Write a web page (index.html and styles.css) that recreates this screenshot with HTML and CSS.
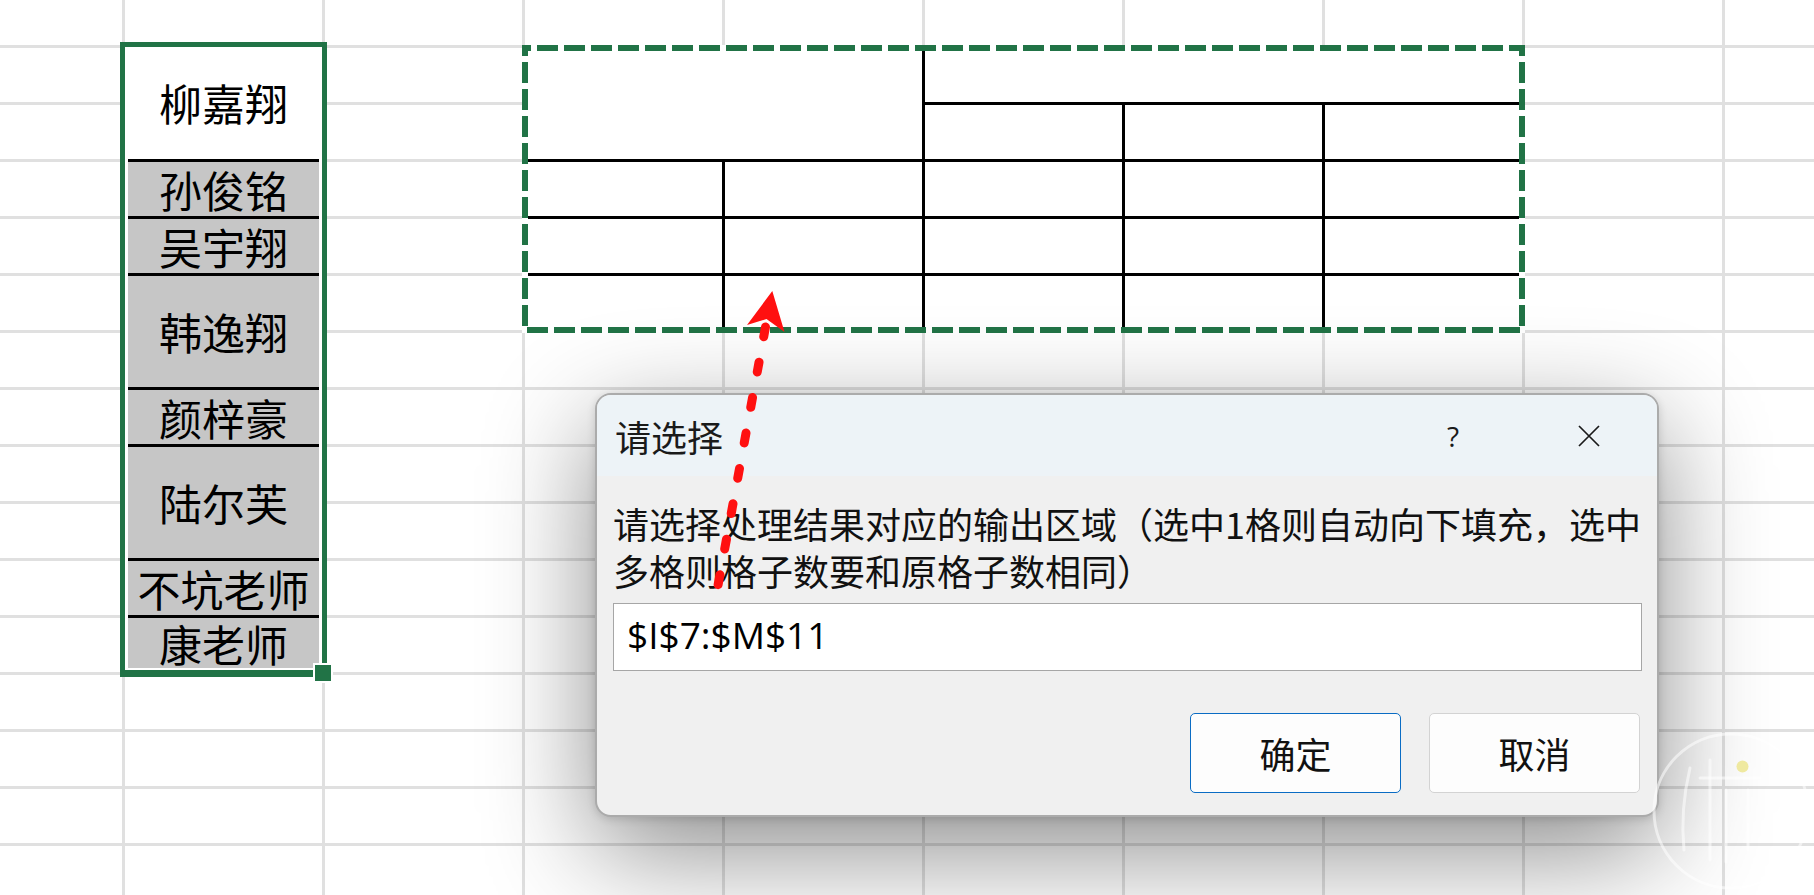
FILE: index.html
```html
<!DOCTYPE html>
<html lang="zh-CN">
<head>
<meta charset="utf-8">
<title>请选择</title>
<link rel="stylesheet" href="styles.css">
</head>
<body>
<div class="sheet">
  <div class="names">
    <div class="nm tall">柳嘉翔</div>
    <div class="nm gray line">孙俊铭</div>
    <div class="nm gray line">吴宇翔</div>
    <div class="nm gray line tall">韩逸翔</div>
    <div class="nm gray line">颜梓豪</div>
    <div class="nm gray line tall">陆尔芙</div>
    <div class="nm gray line">不坑老师</div>
    <div class="nm gray line last">康老师</div>
    <div class="sel"></div>
    <div class="handle"></div>
  </div>

  <div class="tbl">
    <div class="tc head-left"></div>
    <div class="tc head-right bl"></div>
    <div class="tc bl bt"></div>
    <div class="tc bl bt"></div>
    <div class="tc bl bt"></div>

    <div class="tc bt"></div>
    <div class="tc bl bt"></div>
    <div class="tc bl bt"></div>
    <div class="tc bl bt"></div>
    <div class="tc bl bt"></div>

    <div class="tc bt"></div>
    <div class="tc bl bt"></div>
    <div class="tc bl bt"></div>
    <div class="tc bl bt"></div>
    <div class="tc bl bt"></div>

    <div class="tc bt"></div>
    <div class="tc bl bt"></div>
    <div class="tc bl bt"></div>
    <div class="tc bl bt"></div>
    <div class="tc bl bt"></div>

    <svg class="ants" width="1009" height="294" viewBox="0 0 1009 294">
      <rect x="6" y="6" width="997" height="282" fill="none" stroke="#ffffff" stroke-width="6"/>
      <rect x="6" y="6" width="997" height="282" fill="none" stroke="#217346" stroke-width="6" stroke-dasharray="21 6" stroke-dashoffset="15"/>
    </svg>
  </div>
</div>

<div class="dlg">
  <div class="dlg-title">
    <div class="dlg-caption">请选择</div>
    <div class="tb-btn help">?</div>
    <div class="tb-btn close">
      <svg width="22" height="22" viewBox="0 0 22 22"><path d="M1 1 L21 21 M21 1 L1 21" stroke="#1a1a1a" stroke-width="1.7" fill="none"/></svg>
    </div>
  </div>
  <div class="dlg-body">
    <div class="msg">
      <span>请选择处理结果对应的输出区域（选中1格则自动向下填充，选中</span>
      <span>多格则格子数要和原格子数相同）</span>
    </div>
    <div class="inp">$I$7:$M$11</div>
    <div class="btns">
      <div class="btn primary">确定</div>
      <div class="btn">取消</div>
    </div>
  </div>
</div>

<svg class="arrow" width="1814" height="895" viewBox="0 0 1814 895">
  <path d="M765.5 327 Q742 455 717.5 588" fill="none" stroke="#ff1010" stroke-width="9" stroke-linecap="round" stroke-dasharray="10 26"/>
  <polygon points="772.3,291 747,325 766.5,319 784.5,332" fill="#ff1010"/>
</svg>

<svg class="wm" width="1814" height="895" viewBox="0 0 1814 895">
  <g fill="none" stroke="#ffffff" stroke-opacity="0.55" stroke-width="3" stroke-linecap="round">
    <circle cx="1731" cy="811" r="77"/>
    <path d="M1690 768 Q1680 810 1684 850"/>
    <path d="M1710 760 L1710 860"/>
    <path d="M1726 790 L1726 862"/>
    <path d="M1700 778 L1760 778"/>
    <path d="M1748 790 L1748 850"/>
  </g>
  <circle cx="1742.5" cy="766.5" r="6" fill="#efe9a0"/>
</svg>
</body>
</html>
```

FILE: styles.css
```css
html, body {
  margin: 0;
  padding: 0;
}

body {
  width: 1814px;
  height: 895px;
  overflow: hidden;
  position: relative;
  background: #ffffff;
  font-family: "Noto Sans CJK SC", sans-serif;
}

.sheet {
  width: 1814px;
  height: 895px;
  overflow: hidden;
  display: grid;
  grid-template-columns: 122px repeat(9, 200px);
  grid-template-rows: 45px repeat(15, 57px);
  background-color: #ffffff;
  background-image:
    linear-gradient(to right, #e0e0e0 3px, transparent 3px),
    linear-gradient(to bottom, #e0e0e0 3px, transparent 3px);
  background-size: 200px 100%, 100% 57px;
  background-position: 122px 0, 0 45px;
}

/* ---------- name column ---------- */
.names {
  grid-column: 2;
  grid-row: 2 / span 11;
  position: relative;
  background: #ffffff;
  padding: 0 3px 0 6px;
  display: flex;
  flex-direction: column;
}

.nm {
  box-sizing: border-box;
  height: 57px;
  display: flex;
  align-items: center;
  justify-content: center;
  font-size: 43px;
  line-height: 43px;
  color: #000;
  white-space: nowrap;
}

.nm.tall { height: 114px; }
.nm.last { height: 53px; }
.nm.gray { background: #c6c6c6; }
.nm.line { border-top: 3px solid #000; }

.sel {
  position: absolute;
  left: -2px;
  top: -3px;
  right: -5px;
  bottom: -5px;
  border: 5px solid #217346;
  border-bottom-width: 7px;
}

.handle {
  position: absolute;
  left: 191px;
  top: 618px;
  width: 16px;
  height: 16px;
  background: #217346;
  border: 2px solid #ffffff;
}

/* ---------- target table ---------- */
.tbl {
  grid-column: 4 / span 5;
  grid-row: 2 / span 5;
  position: relative;
  background: #ffffff;
  display: grid;
  grid-template-columns: repeat(5, 200px);
  grid-template-rows: repeat(5, 57px);
}

.tc { box-sizing: border-box; }
.tc.bl { border-left: 3px solid #000; }
.tc.bt { border-top: 3px solid #000; }
.head-left { grid-column: 1 / span 2; grid-row: 1 / span 2; }
.head-right { grid-column: 3 / span 3; grid-row: 1; }

.ants {
  position: absolute;
  left: -3px;
  top: -3px;
}

/* ---------- dialog ---------- */
.dlg {
  position: absolute;
  left: 595px;
  top: 393px;
  width: 1064px;
  height: 424px;
  box-sizing: border-box;
  border: 2px solid #ababab;
  border-radius: 16px;
  background: #f0f0f0;
  box-shadow: 0 34px 110px rgba(0, 0, 0, 0.46), 0 2px 8px rgba(0, 0, 0, 0.14);
  overflow: hidden;
  display: flex;
  flex-direction: column;
  color: #1a1a1a;
  font-family: "Noto Sans CJK SC", sans-serif;
}

.dlg-title {
  height: 81px;
  flex: none;
  background: #edf3f7;
  display: flex;
  align-items: center;
  padding-left: 18px;
}

.dlg-caption {
  flex: 1;
  font-size: 36px;
}

.tb-btn {
  width: 136px;
  height: 100%;
  display: flex;
  align-items: center;
  justify-content: center;
}

.help {
  font-family: "Open Sans", sans-serif;
  font-size: 28px;
  color: #1a1a1a;
}

.dlg-body {
  flex: 1;
  padding: 24px 15px 22px 16px;
  display: flex;
  flex-direction: column;
}

.msg {
  font-size: 36px;
  line-height: 47px;
  color: #111;
}

.msg span {
  display: block;
  white-space: nowrap;
}

.inp {
  margin-top: 9px;
  height: 68px;
  box-sizing: border-box;
  border: 1px solid #a6a6a6;
  background: #ffffff;
  display: flex;
  align-items: center;
  padding: 0 12px 5px 13px;
  font-family: "Open Sans", sans-serif;
  font-size: 37px;
  color: #000;
}

.btns {
  margin-top: 42px;
  display: flex;
  justify-content: flex-end;
  gap: 28px;
  padding-right: 2px;
}

.btn {
  width: 211px;
  height: 80px;
  box-sizing: border-box;
  border: 1px solid #d3d3d3;
  border-radius: 5px;
  background: #fdfdfd;
  display: flex;
  align-items: center;
  justify-content: center;
  font-size: 36px;
  color: #111;
}

.btn.primary {
  border-color: #0a6cc4;
}

/* ---------- overlays ---------- */
.arrow, .wm {
  position: absolute;
  left: 0;
  top: 0;
  pointer-events: none;
}
```
